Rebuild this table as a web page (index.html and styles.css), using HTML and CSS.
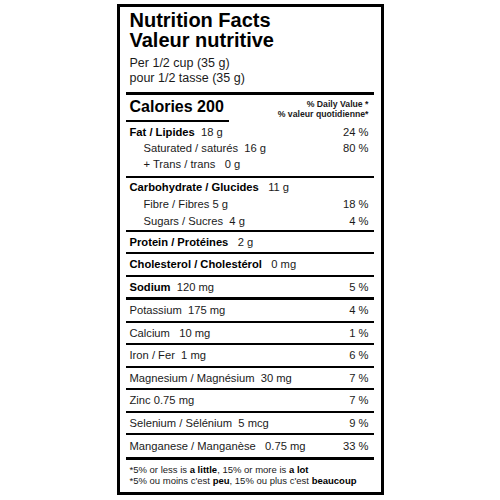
FILE: index.html
```html
<!DOCTYPE html>
<html lang="en">
<head>
  <meta charset="UTF-8" />
  <title>Nutrition Facts</title>
  <link rel="stylesheet" href="styles.css">
</head>
<body>

  <div class="page">
    <div class="label">

      <div class="label-head">
        <h1 class="title">Nutrition Facts<br>Valeur nutritive</h1>
        <p class="serving">Per 1/2 cup (35 g)<br>pour 1/2 tasse (35 g)</p>
      </div>

      <div class="calories">
        <div class="cal-amount">Calories 200</div>
        <div class="dv-head">% Daily Value *<br>% valeur quotidienne*</div>
      </div>

      <div class="group group-fat">
        <div class="line"><span><b>Fat / Lipides</b>&nbsp; 18 g</span><span>24 %</span></div>
        <div class="line sub"><span>Saturated / saturés&nbsp; 16 g</span><span>80 %</span></div>
        <div class="line sub"><span>+ Trans / trans&nbsp;&nbsp; 0 g</span></div>
      </div>

      <div class="group group-carb">
        <div class="line"><span><b>Carbohydrate / Glucides</b>&nbsp;&nbsp; 11 g</span></div>
        <div class="line sub"><span>Fibre / Fibres 5 g</span><span>18 %</span></div>
        <div class="line sub"><span>Sugars / Sucres&nbsp; 4 g</span><span>4 %</span></div>
      </div>

      <div class="row"><span><b>Protein / Protéines</b>&nbsp;&nbsp; 2 g</span></div>
      <div class="row"><span><b>Cholesterol / Cholestérol</b>&nbsp;&nbsp; 0 mg</span></div>
      <div class="row row-thick"><span><b>Sodium</b>&nbsp; 120 mg</span><span>5 %</span></div>

      <div class="row"><span>Potassium&nbsp; 175 mg</span><span>4 %</span></div>
      <div class="row"><span>Calcium&nbsp;&nbsp; 10 mg</span><span>1 %</span></div>
      <div class="row"><span>Iron / Fer&nbsp; 1 mg</span><span>6 %</span></div>
      <div class="row"><span>Magnesium / Magnésium&nbsp; 30 mg</span><span>7 %</span></div>
      <div class="row"><span>Zinc 0.75 mg</span><span>7 %</span></div>
      <div class="row"><span>Selenium / Sélénium&nbsp; 5 mcg</span><span>9 %</span></div>
      <div class="row row-thick row-last"><span>Manganese / Manganèse&nbsp;&nbsp; 0.75 mg</span><span>33 %</span></div>

      <div class="footnote">
        <p>*5% or less is <b>a little</b>, 15% or more is <b>a lot</b></p>
        <p>*5% ou moins c'est <b>peu</b>, 15% ou plus c'est <b>beaucoup</b></p>
      </div>

    </div>
  </div>

</body>
</html>
```

FILE: styles.css
```css
html, body {
  margin: 0;
  padding: 0;
  background: #fff;
  font-family: "Liberation Sans", Arial, sans-serif;
  color: #1a1a1a;
}

.page {
  display: flex;
  justify-content: center;
  padding-top: 4px;
}

.label {
  box-sizing: border-box;
  width: 267px;
  border: 3px solid #000;
  padding: 0 7px 0 6px;
}

.label-head {
  padding: 3px 0 6px 4px;
  border-bottom: 3px solid #000;
}

.title {
  margin: 0;
  font-size: 20px;
  line-height: 20px;
  font-weight: bold;
  color: #000;
}

.serving {
  margin: 6px 0 0;
  font-size: 12.5px;
  line-height: 15px;
}

.calories {
  display: flex;
  justify-content: space-between;
  align-items: flex-start;
  padding-top: 3px;
}

.cal-amount {
  width: 99px;
  padding: 0 0 3.5px 4px;
  font-size: 16px;
  line-height: 18px;
  font-weight: bold;
  color: #000;
  border-bottom: 2px solid #000;
}

.dv-head {
  padding: 1px 5px 0 0;
  font-size: 8.7px;
  line-height: 10px;
  font-weight: bold;
  text-align: right;
}

.group {
  border-bottom: 2px solid #000;
  font-size: 11.2px;
}
.group-fat {
  padding: 2px 0 4px;
  line-height: 16px;
}
.group-carb {
  padding: 1px 0 0;
  line-height: 17px;
}

.line,
.row {
  display: flex;
  justify-content: space-between;
  padding: 0 5px 0 4px;
}
.line.sub {
  padding-left: 18px;
}

.row {
  height: 20.5px;
  line-height: 20.5px;
  font-size: 11.2px;
  border-bottom: 2px solid #000;
}
.row-thick {
  border-bottom-width: 3px;
}
.row-last {
  height: 22px;
  line-height: 22px;
}

b {
  color: #000;
}

.footnote {
  padding: 3.5px 0 5px 4px;
  font-size: 9.5px;
  line-height: 11.6px;
}
.footnote p {
  margin: 0;
}
```
